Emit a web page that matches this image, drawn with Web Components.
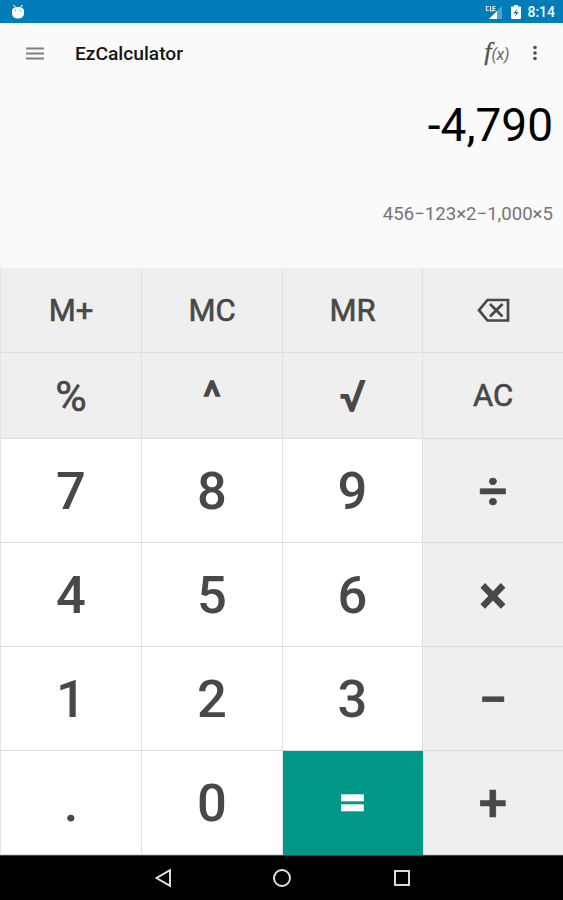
<!DOCTYPE html>
<html lang="en">
<head>
<meta charset="utf-8">
<title>EzCalculator</title>
<style>
  body {
    margin: 0;
    font-family: Roboto, "Liberation Sans", sans-serif;
  }
</style>
</head>
<body>
<ez-calculator></ez-calculator>

<script>
class StatusBar extends HTMLElement {
  constructor() {
    super();
    this.attachShadow({ mode: 'open' });
    this.shadowRoot.innerHTML = `
      <style>
        :host {
          display: flex;
          align-items: center;
          height: 23px;
          box-sizing: border-box;
          padding: 1px 8px 0 10px;
          background: #007cb9;
          color: #fff;
        }
        svg { display: block; }
        .robot { margin-right: auto; }
        .battery { margin: 0 6px 0 8px; }
        span {
          font-size: 14px;
          font-weight: 500;
          line-height: 22px;
        }
      </style>
      <svg class="robot" width="16" height="16" viewBox="0 0 16 16">
        <path d="M3.500 1l2 2.400M12.500 1l-2 2.400" stroke="#b5dbee" stroke-width="1.300"/>
        <path d="M2 6.500C2 4.200 5 3 8 3s6 1.200 6 3.500v3c0 3-2.500 5-6 5s-6-2-6-5z" fill="#fff"/>
        <circle cx="5.600" cy="6.500" r=".7" fill="#5aa9d3"/>
        <circle cx="10.400" cy="6.500" r=".7" fill="#5aa9d3"/>
      </svg>
      <svg width="18" height="15" viewBox="0 0 18 15">
        <path d="M17 1v13H4z" fill="#4fa3cf"/>
        <path d="M12 6v8H4z" fill="#fff"/>
        <path d="M4 1.500H1.500v4H4M5.500 1v5h2.500M10.500 1.500H8v4h2.500M8 3.500h2.500" fill="none" stroke="#d8ebf5" stroke-width="1.200"/>
      </svg>
      <svg class="battery" width="10" height="15" viewBox="0 0 10 15">
        <path d="M3 0h4v1.500h2.200a.8.8 0 0 1 .8.800V13a1 1 0 0 1-1 1H1a1 1 0 0 1-1-1V2.300a.8.8 0 0 1 .8-.8H3z" fill="#fff"/>
        <path d="M6 3.500L2.500 8.500H5L4 12l3.500-5H5z" fill="#007cb9"/>
      </svg>
      <span><slot></slot></span>
    `;
  }
}

class AppToolbar extends HTMLElement {
  constructor() {
    super();
    this.attachShadow({ mode: 'open' });
    this.shadowRoot.innerHTML = `
      <style>
        :host {
          display: flex;
          align-items: center;
          height: 60px;
          box-sizing: border-box;
          padding: 0 25px 0 26px;
        }
        svg { display: block; }
        h1 {
          margin: 0 auto 0 31px;
          padding-top: 2px;
          font-size: 19.2px;
          font-weight: 500;
          line-height: 24px;
          color: #151515;
        }
        .fx {
          display: flex;
          align-items: baseline;
          margin-right: 23px;
          font-family: "Liberation Serif", serif;
          font-style: italic;
          font-size: 26px;
          line-height: 26px;
          color: #505050;
          -webkit-text-stroke: 0.3px #505050;
        }
        .fx small {
          font-family: Roboto, sans-serif;
          font-size: 16px;
          letter-spacing: -0.3px;
          color: #666;
          -webkit-text-stroke: 0;
        }
      </style>
      <svg width="18" height="13" viewBox="0 0 18 13">
        <path d="M0 1.500h18M0 6.500h18M0 11.500h18" stroke="#808080" stroke-width="1.900"/>
      </svg>
      <h1><slot></slot></h1>
      <div class="fx">f<small>(x)</small></div>
      <svg width="6" height="16" viewBox="0 0 6 16">
        <g fill="#505050">
          <circle cx="3" cy="2.500" r="1.800"/>
          <circle cx="3" cy="8" r="1.800"/>
          <circle cx="3" cy="13.500" r="1.800"/>
        </g>
      </svg>
    `;
  }
}

class CalcDisplay extends HTMLElement {
  constructor() {
    super();
    this.attachShadow({ mode: 'open' });
    this.shadowRoot.innerHTML = `
      <style>
        :host {
          display: flex;
          flex-direction: column;
          align-items: flex-end;
          height: 185px;
          box-sizing: border-box;
          padding: 14px 10px 0 0;
        }
        .result {
          font-size: 46px;
          line-height: 56px;
          color: #000;
        }
        .expression {
          margin-top: 49px;
          font-size: 18.6px;
          line-height: 24px;
          color: #757575;
        }
      </style>
      <div class="result"><slot name="result"></slot></div>
      <div class="expression"><slot name="expression"></slot></div>
    `;
  }
}

class CalcKey extends HTMLElement {
  constructor() {
    super();
    this.attachShadow({ mode: 'open' });
    this.shadowRoot.innerHTML = `
      <style>
        :host {
          display: flex;
          align-items: center;
          justify-content: center;
          box-sizing: border-box;
          padding-top: 2px;
          border-right: 1px solid #e0e0e0;
          border-bottom: 1px solid #dedede;
          background: #efefef;
          color: #484848;
          font-size: 31px;
          line-height: 1.172;
          -webkit-text-stroke: 0.6px currentColor;
        }
        :host([kind="digit"]) {
          background: #fff;
          font-size: 52.500px;
          font-weight: 500;
          -webkit-text-stroke: 0;
        }
        :host([kind="operator"]) {
          padding-top: 3px;
          border-right: 0;
          font-size: 51px;
          font-weight: 500;
          -webkit-text-stroke: 0.7px currentColor;
        }
        :host([kind="function"]) { font-size: 43px; }
        :host([strong]) { -webkit-text-stroke: 1.400px currentColor; }
        :host([kind="equals"]) {
          padding: 0 0 1px;
          background: #009788;
          border-color: #009788;
          color: #fff;
          font-size: 49px;
          font-weight: 900;
          -webkit-text-stroke: 0.5px currentColor;
        }
        :host([edge]) { border-right: 0; }
        :host([first]) { border-left: 1px solid #e4e4e4; }
      </style>
      <span><slot></slot></span>
    `;
  }
}

class BackspaceIcon extends HTMLElement {
  constructor() {
    super();
    this.attachShadow({ mode: 'open' });
    this.shadowRoot.innerHTML = `
      <style>
        :host { display: block; }
        svg { display: block; }
      </style>
      <svg width="34" height="26" viewBox="0 0 34 26">
        <path d="M11.500 2H32v20.500H11.500L3 12.200zM14 6l12.500 12.500M26.500 6L14 18.500" fill="none" stroke="#484848" stroke-width="2.700"/>
      </svg>
    `;
  }
}

class NavBar extends HTMLElement {
  constructor() {
    super();
    this.attachShadow({ mode: 'open' });
    this.shadowRoot.innerHTML = `
      <style>
        :host {
          display: flex;
          align-items: center;
          justify-content: center;
          gap: 100px;
          height: 45px;
          box-sizing: border-box;
          border-top: 1px solid #444;
          background: #000;
        }
        svg { display: block; }
      </style>
      <svg width="20" height="20" viewBox="0 0 20 20">
        <path d="M18 2.200v15.600L4.500 10z" fill="none" stroke="#e4e4e4" stroke-width="1.900"/>
      </svg>
      <svg width="20" height="20" viewBox="0 0 20 20">
        <circle cx="10" cy="10" r="8" fill="none" stroke="#e4e4e4" stroke-width="1.900"/>
      </svg>
      <svg width="20" height="20" viewBox="0 0 20 20">
        <rect x="3" y="3" width="14" height="14" fill="none" stroke="#e4e4e4" stroke-width="1.900"/>
      </svg>
    `;
  }
}

class EzCalculator extends HTMLElement {
  constructor() {
    super();
    this.attachShadow({ mode: 'open' });
    this.shadowRoot.innerHTML = `
      <style>
        :host {
          display: flex;
          flex-direction: column;
          width: 563px;
          height: 900px;
          background: #fafafa;
        }
        #keys {
          display: grid;
          grid-template-columns: 142px 141px 140px 140px;
          grid-template-rows: 85px 86px 104px 104px 104px 104px;
        }
      </style>

      <status-bar>8:14</status-bar>
      <app-toolbar>EzCalculator</app-toolbar>
      <calc-display>
        <span slot="result">-4,790</span>
        <span slot="expression">456−123×2−1,000×5</span>
      </calc-display>

      <div id="keys">
        <calc-key first>M+</calc-key>
        <calc-key>MC</calc-key>
        <calc-key>MR</calc-key>
        <calc-key edge><backspace-icon></backspace-icon></calc-key>

        <calc-key first kind="function">%</calc-key>
        <calc-key kind="function" strong>^</calc-key>
        <calc-key kind="function" strong>√</calc-key>
        <calc-key edge>AC</calc-key>

        <calc-key first kind="digit">7</calc-key>
        <calc-key kind="digit">8</calc-key>
        <calc-key kind="digit">9</calc-key>
        <calc-key kind="operator">÷</calc-key>

        <calc-key first kind="digit">4</calc-key>
        <calc-key kind="digit">5</calc-key>
        <calc-key kind="digit">6</calc-key>
        <calc-key kind="operator" strong>×</calc-key>

        <calc-key first kind="digit">1</calc-key>
        <calc-key kind="digit">2</calc-key>
        <calc-key kind="digit">3</calc-key>
        <calc-key kind="operator">−</calc-key>

        <calc-key first kind="digit">.</calc-key>
        <calc-key kind="digit">0</calc-key>
        <calc-key kind="equals">=</calc-key>
        <calc-key kind="operator">+</calc-key>
      </div>

      <nav-bar></nav-bar>
    `;
  }
}

customElements.define('status-bar', StatusBar);
customElements.define('app-toolbar', AppToolbar);
customElements.define('calc-display', CalcDisplay);
customElements.define('backspace-icon', BackspaceIcon);
customElements.define('calc-key', CalcKey);
customElements.define('nav-bar', NavBar);
customElements.define('ez-calculator', EzCalculator);
</script>
</body>
</html>
